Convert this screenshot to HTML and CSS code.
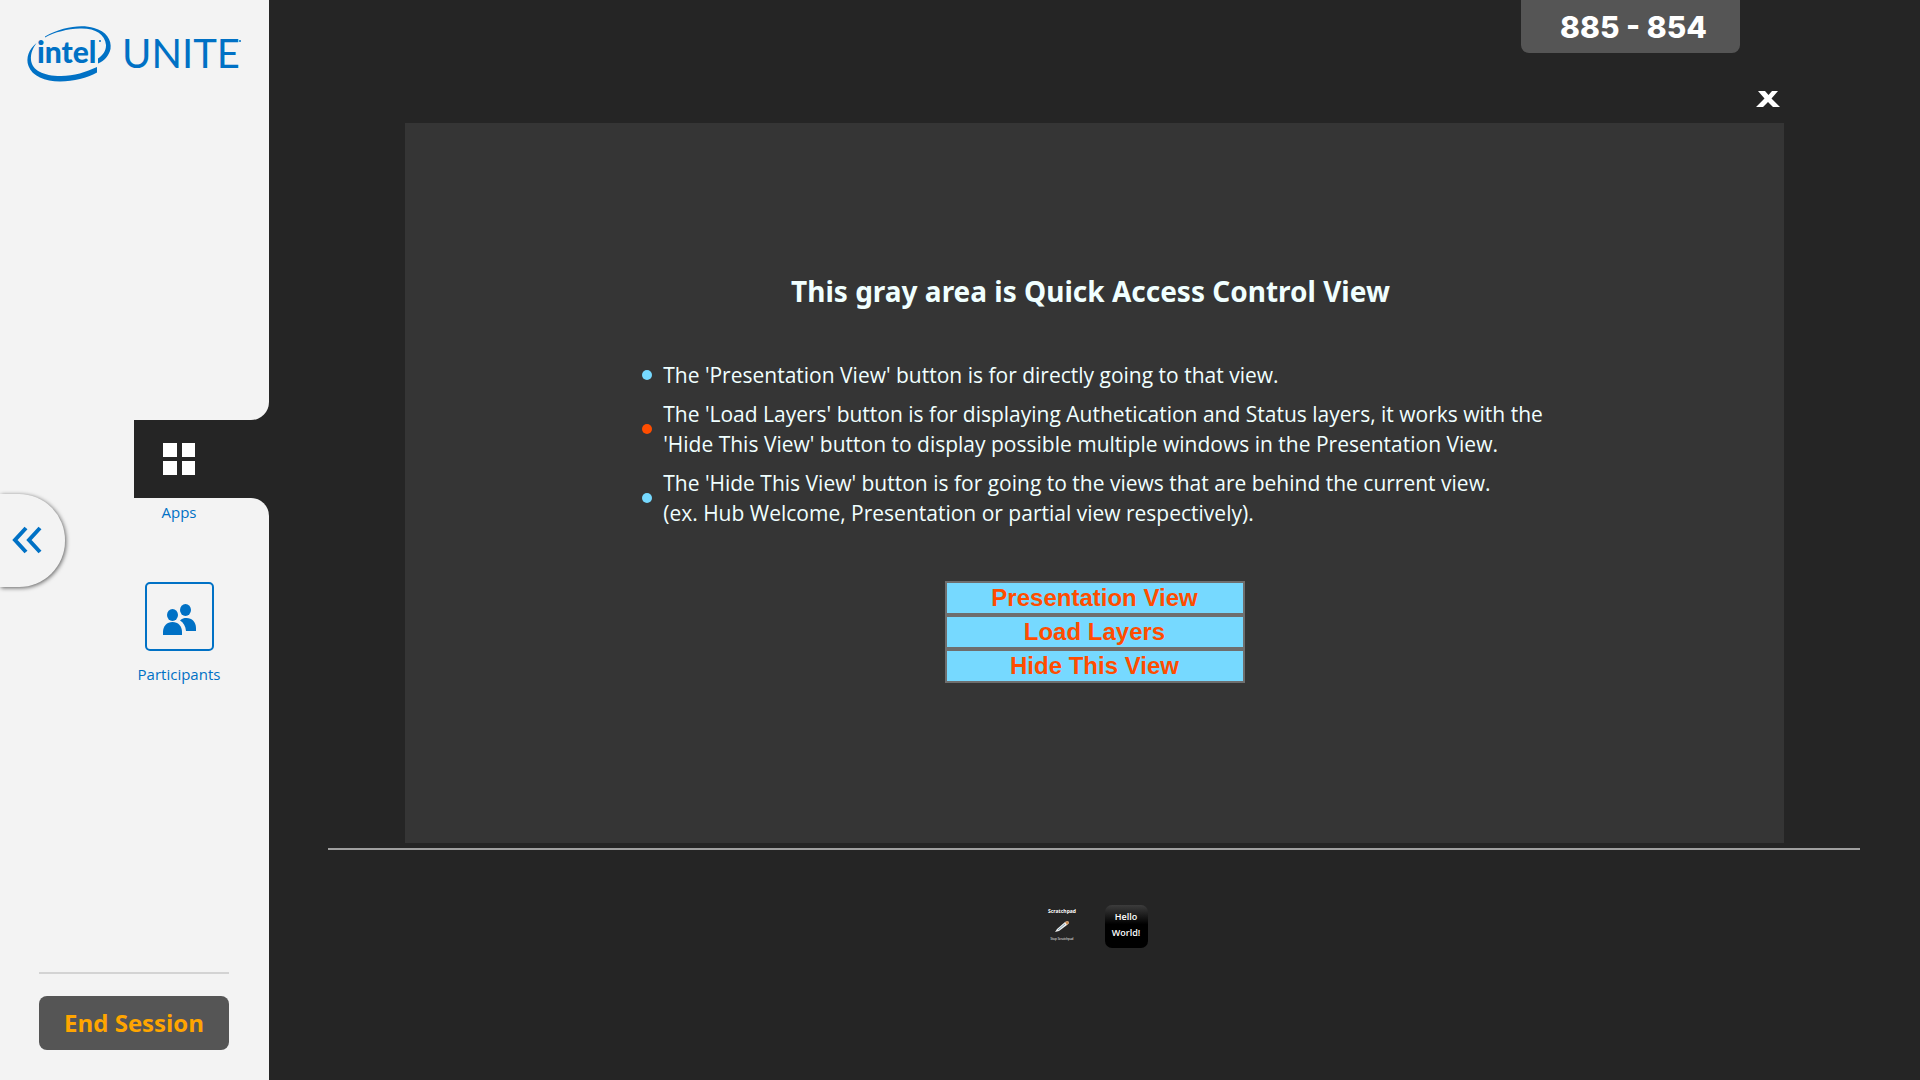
FILE: index.html
```html
<!DOCTYPE html>
<html lang="en">
<head>
<meta charset="utf-8">
<title>Intel Unite</title>
<link rel="stylesheet" href="styles.css">
</head>
<body>
<div class="app">
  <aside class="sidebar">
    <header class="sidebar-top">
      <svg class="logo" viewBox="24 24 220 60" role="img" aria-label="Intel Unite">
        <path d="M45 36.500C62 27 81 24 94 28C106 31 112 40 110.500 49C109 56 104 61 98 63.500V58.500C103 55 106 51 106 45C105 34 95 28 80 28.500C67 29 55 32 45 37.500Z"/>
        <path d="M36.500 43C29 49 25.500 58 28.500 66C32 76 45 81.500 60 81.500C74 81.500 87 78 97 72.500V67C86 72 74 76 61 76C43 76 32 70 31 60C30.500 53 33 48 36.500 43Z"/>
        <text class="logo-intel" x="37" y="63">intel</text>
        <text class="logo-unite" x="122" y="68">UNITE</text>
        <circle cx="100" cy="41" r="1"/>
        <circle cx="240" cy="41" r="1"/>
      </svg>
    </header>
    <div class="tab-row">
      <button class="tab-apps" type="button" aria-labelledby="apps-label">
        <svg width="32" height="32" viewBox="0 0 32 32"><path d="M0 0h14v14H0zM19 0h13v14H19zM0 18h14v14H0zM19 18h13v14H19z"/></svg>
      </button>
    </div>
    <div class="sidebar-bottom">
      <span class="tab-label" id="apps-label">Apps</span>
      <button class="tab-people" type="button" aria-labelledby="people-label">
        <svg width="33" height="31" viewBox="0 0 33 31">
          <ellipse cx="9.500" cy="11" rx="5.500" ry="6"/>
          <ellipse cx="22.500" cy="6" rx="5.500" ry="6"/>
          <path d="M0 31V28C0 22 4 18 9.500 18S19 22 19 28V31Z"/>
          <path d="M17 16.500C19 14.500 21 14 23.500 14C29 14 33 18 33 24V27H23C22.500 22 20.500 18.500 17 16.500Z"/>
        </svg>
      </button>
      <span class="tab-label" id="people-label">Participants</span>
      <footer class="sidebar-footer">
        <button class="end-session" type="button">End Session</button>
      </footer>
    </div>
    <button class="collapse" type="button" aria-label="Collapse">
      <svg width="30" height="28" viewBox="0 0 30 28"><path d="M14 2L3 14L14 26M28 2L17 14L28 26"/></svg>
    </button>
  </aside>
  <main class="main">
    <div class="pin-row"><div class="pin">885 - 854</div></div>
    <div class="close-row">
      <button class="close" type="button" aria-label="Close">
        <svg width="24" height="16" viewBox="0 0 24 16"><path d="M2 0H9L12.500 4L16 0H22L15.500 7.500L24 16H17L12 11L7 16H0L8.500 7.500Z"/></svg>
      </button>
    </div>
    <section class="panel">
      <h1 class="panel-title">This gray area is Quick Access Control View</h1>
      <ul class="notes">
        <li class="note">The 'Presentation View' button is for directly going to that view.</li>
        <li class="note note-alt">The 'Load Layers' button is for displaying Authetication and Status layers, it works with the<br>'Hide This View' button to display possible multiple windows in the Presentation View.</li>
        <li class="note">The 'Hide This View' button is for going to the views that are behind the current view.<br>(ex. Hub Welcome, Presentation or partial view respectively).</li>
      </ul>
      <div class="actions">
        <button class="action" type="button">Presentation View</button>
        <button class="action" type="button">Load Layers</button>
        <button class="action" type="button">Hide This View</button>
      </div>
    </section>
    <nav class="dock">
      <button class="dock-app scratchpad" type="button">
        <span class="scratch-name">Scratchpad</span>
        <svg width="14" height="11" viewBox="0 0 14 11"><path d="M0 11L2 8L10 1L13 0L14 2L12 4L4 10Z" fill="#eee"/><path d="M10 1L13 0L14 2L12 4Z" fill="#c98d55"/><path d="M3 9L10 3" stroke="#7ba3b5"/></svg>
        <span class="scratch-note">Stop Scratchpad</span>
      </button>
      <button class="dock-app hello" type="button">Hello World!</button>
    </nav>
  </main>
</div>
</body>
</html>
```
FILE: styles.css
```css
* { box-sizing: border-box; }

body {
  margin: 0;
  background: #252525;
  color: #f0ffff;
  font-family: "Open Sans", "Noto Sans", sans-serif;
}

button {
  margin: 0;
  padding: 0;
  border: 0;
  background: none;
  font: inherit;
  color: inherit;
  cursor: pointer;
}

svg { display: block; }

.app {
  display: flex;
  min-height: 100vh;
}

/* Sidebar */
.sidebar {
  position: relative;
  display: flex;
  flex-direction: column;
  flex: 0 0 269px;
  color: #0071c5;
}

.sidebar-top {
  height: 420px;
  padding: 24px;
  background: #f3f3f3;
  border-radius: 0 0 18px 0;
}

.logo {
  width: 220px;
  height: 60px;
  fill: #0071c5;
}

.logo-intel { font: 900 30px Lato, sans-serif; }
.logo-unite { font: 400 40px Lato, sans-serif; }

.tab-row {
  display: flex;
  height: 78px;
  padding-left: 134px;
  background: linear-gradient(to right, #f3f3f3 134px, #252525 134px);
}

.tab-apps {
  display: flex;
  align-items: center;
  width: 90px;
  padding-left: 29px;
  fill: #fff;
}

.sidebar-bottom {
  display: flex;
  flex: 1;
  flex-direction: column;
  padding-top: 4px;
  background: #f3f3f3;
  border-radius: 0 18px 0 0;
}

.tab-label {
  width: 90px;
  margin-left: 134px;
  font-size: 15px;
  line-height: 20px;
  text-align: center;
}

.tab-people {
  display: flex;
  align-items: center;
  justify-content: center;
  width: 69px;
  height: 69px;
  margin: 60px 0 13px 145px;
  padding-top: 6px;
  border: 2px solid #0071c5;
  border-radius: 5px;
  fill: #0071c5;
}

.sidebar-footer {
  margin: auto 40px 30px 39px;
  padding-top: 22px;
  border-top: 2px solid #d3d3d3;
}

.end-session {
  width: 100%;
  height: 54px;
  padding-bottom: 2px;
  border-radius: 8px;
  background: #555;
  color: #ffa500;
  font-size: 24px;
  font-weight: 700;
}

.collapse {
  position: absolute;
  top: 494px;
  left: 0;
  width: 65px;
  height: 93px;
  padding: 0 0 2px 12px;
  border-radius: 0 46px 46px 0;
  background: #f3f3f3;
  box-shadow: 1px 1px 4px rgba(0, 0, 0, 0.6);
  fill: none;
  stroke: #0071c5;
  stroke-width: 4px;
}

/* Main area */
.main {
  display: flex;
  flex: 1;
  flex-direction: column;
}

.pin-row {
  display: flex;
  justify-content: flex-end;
  padding-right: 180px;
}

.pin {
  width: 219px;
  padding: 1px 0 0 6px;
  border-radius: 0 0 8px 8px;
  background: #555;
  color: #fff;
  font: 800 30px/52px Inter, sans-serif;
  text-align: center;
}

.close-row {
  display: flex;
  justify-content: flex-end;
  padding: 38px 140px 16px;
}

.close { fill: #fff; }

.panel {
  display: flex;
  flex-direction: column;
  align-items: center;
  min-height: 720px;
  margin: 0 136px;
  padding-top: 148px;
  background: #353535;
}

.panel-title {
  margin: 0;
  padding-right: 8px;
  font-family: "Noto Sans", sans-serif;
  font-size: 28px;
  line-height: 40px;
}

.notes {
  display: flex;
  flex-direction: column;
  gap: 9px;
  margin: 49px 0 53px;
  padding: 0 4px 0 0;
  font-size: 21px;
  line-height: 30px;
  list-style: none;
}

.note {
  position: relative;
  padding-left: 21px;
}

.note::before {
  position: absolute;
  top: calc(50% - 5px);
  left: 0;
  width: 10px;
  height: 10px;
  border-radius: 50%;
  background: #76d9ff;
  content: "";
}

.note-alt::before { background: #ff4d00; }

.actions {
  display: flex;
  flex-direction: column;
  width: 300px;
}

.action {
  height: 34px;
  border: 2px solid #6e6e6e;
  background: #76d9ff;
  color: #ff4d00;
  font: 700 24px/28px "Liberation Sans", Arial, sans-serif;
}

/* Dock */
.dock {
  display: flex;
  justify-content: center;
  gap: 21px;
  margin: 5px 60px 0 59px;
  padding-top: 55px;
  border-top: 2px solid #a0a0a0;
}

.dock-app {
  width: 43px;
  height: 43px;
  color: #fff;
}

.scratchpad {
  display: flex;
  flex-direction: column;
  align-items: center;
  gap: 4px;
  white-space: nowrap;
}

.scratch-name {
  font-size: 5px;
  font-weight: 700;
  line-height: 12px;
}

.scratch-note {
  font-size: 3px;
  line-height: 6px;
}

.hello {
  padding-bottom: 4px;
  border-radius: 7px;
  background: linear-gradient(#3c3c3c, #000 45%);
  font-size: 9px;
  font-weight: 600;
  line-height: 16px;
}
```
